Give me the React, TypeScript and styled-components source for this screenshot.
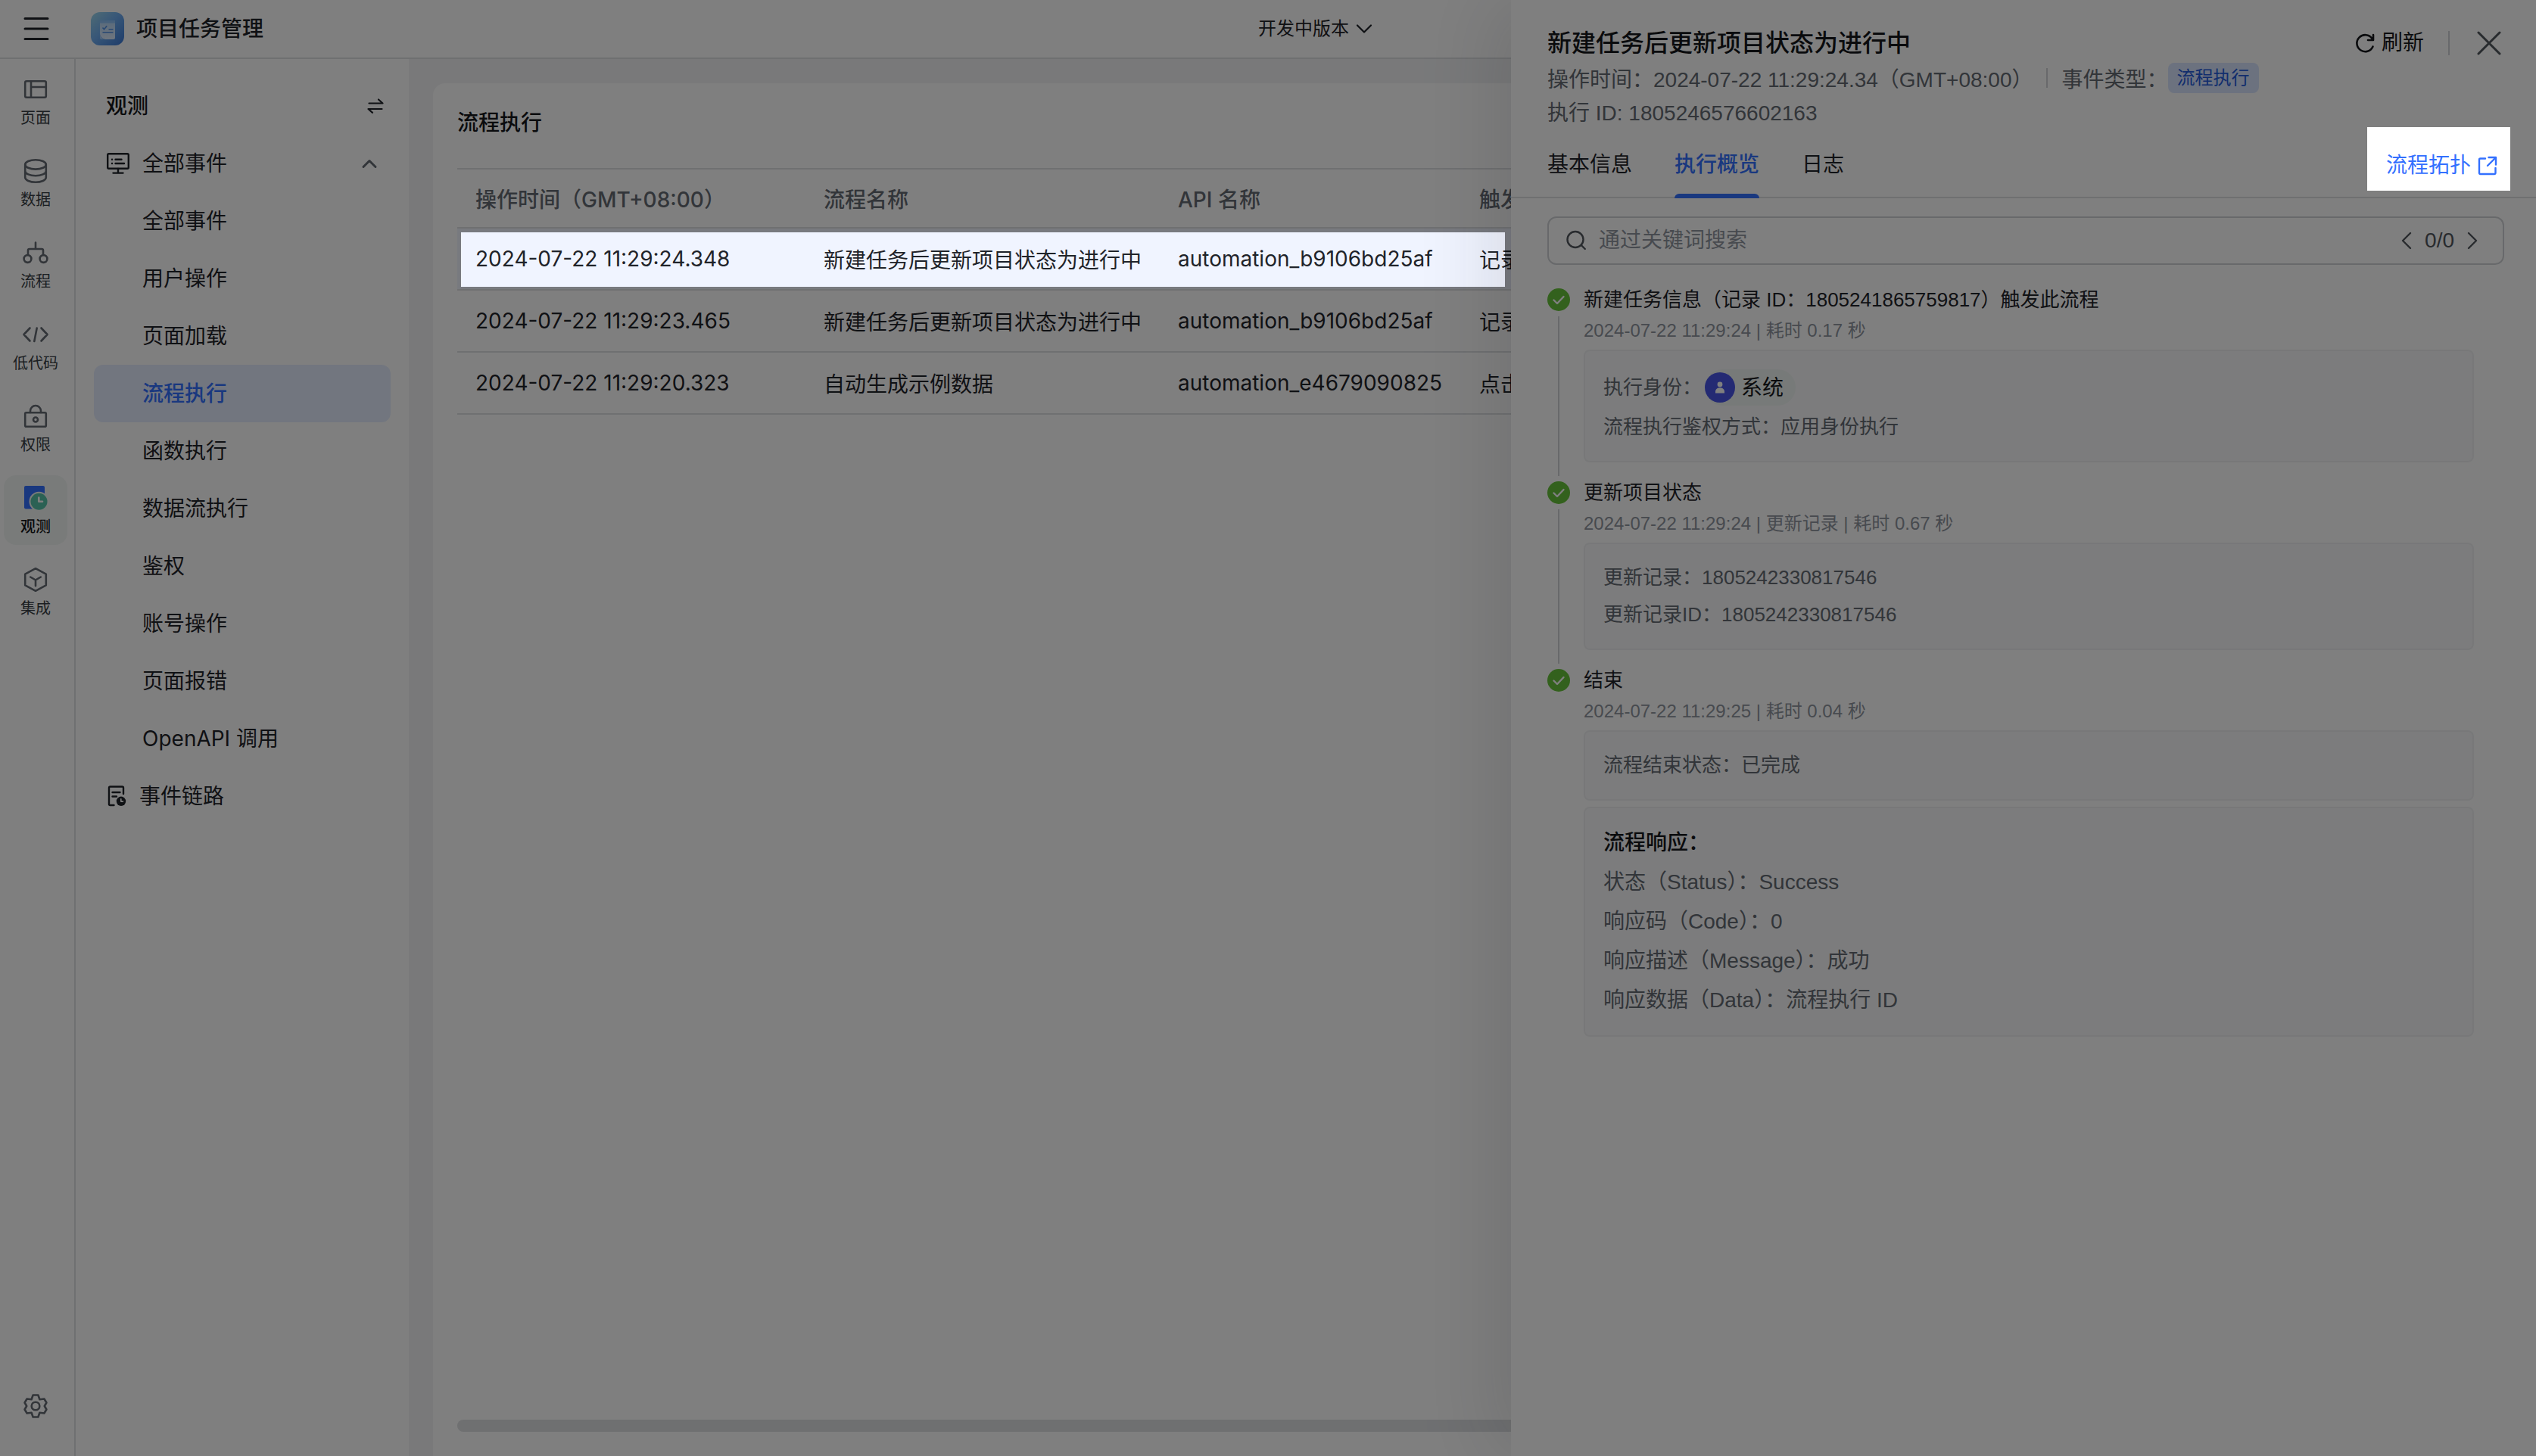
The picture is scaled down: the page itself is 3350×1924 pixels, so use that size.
import React from "react";
import styled, { createGlobalStyle, css } from "styled-components";

const sans = `Inter, "Noto Sans CJK SC", sans-serif`;
const drawerSans = `"Liberation Sans", "Noto Sans CJK SC", sans-serif`;

const color = {
  text: "#1f2329",
  title: "#14161a",
  secondary: "#646a73",
  muted: "#8f959e",
  line: "#dee0e3",
  blue: "#3370ff",
  canvas: "#f2f3f5",
  railActive: "#f3f7f5",
};

const DRAWER_WIDTH = "1354px";

const GlobalStyle = createGlobalStyle`
  *, *::before, *::after { box-sizing: border-box; }
  body { margin: 0; background: #fff; color: ${color.text}; font-family: ${sans}; font-size: 28px; }
  button, input, select { font: inherit; color: inherit; border: 0; padding: 0; margin: 0; background: none; }
  a { color: inherit; text-decoration: none; }
  h1, h2, p, ol { margin: 0; padding: 0; font-weight: 500; }
`;

const Page = styled.div`
  position: relative;
  display: flex;
  flex-direction: column;
  height: 100vh;
  overflow: hidden;
`;

/* ---------- top bar ---------- */

const TopBar = styled.header`
  display: flex;
  align-items: center;
  height: 78px;
  flex: none;
  border-bottom: 2px solid ${color.line};
`;

const MenuButton = styled.button`
  display: flex;
  width: 120px;
  padding-left: 30px;
`;

const TopBarBody = styled.div`
  flex: 1;
  display: grid;
  grid-template-columns: 1fr auto 1fr;
  align-items: center;
`;

const AppName = styled.h1`
  display: flex;
  align-items: center;
  gap: 16px;
  font-size: 28px;
  line-height: 40px;
`;

const VersionField = styled.label`
  display: flex;
  align-items: center;
  gap: 10px;
  padding-left: 4px;
`;

const VersionSelect = styled.select`
  appearance: none;
  font-size: 24px;
  line-height: 36px;
`;

/* ---------- frame ---------- */

const Body = styled.div`
  flex: 1;
  display: flex;
  min-height: 0;
`;

const Rail = styled.nav`
  display: flex;
  flex-direction: column;
  gap: 16px;
  width: 100px;
  flex: none;
  padding: 10px 9px 32px 5px;
  border-right: 2px solid ${color.line};
`;

const RailItem = styled.a<{ $active?: boolean }>`
  display: flex;
  flex-direction: column;
  align-items: center;
  gap: 8px;
  height: 92px;
  padding-top: 14px;
  border-radius: 16px;
  font-size: 20px;
  line-height: 28px;
  white-space: nowrap;
  color: ${(p) => (p.$active ? color.title : "#373c43")};
  font-weight: ${(p) => (p.$active ? 500 : 400)};
  background: ${(p) => (p.$active ? color.railActive : "transparent")};
  svg { color: ${color.secondary}; flex: none; }
`;

const SettingsButton = styled.button`
  display: flex;
  justify-content: center;
  margin-top: auto;
  padding: 18px 0;
  color: ${color.secondary};
`;

const Sidebar = styled.nav`
  display: flex;
  flex-direction: column;
  width: 440px;
  flex: none;
  padding: 24px;
`;

const SidebarHead = styled.div`
  display: flex;
  align-items: center;
  justify-content: space-between;
  height: 76px;
  padding: 0 10px 0 16px;
`;

const SidebarTitle = styled.h2`
  font-size: 28px;
  line-height: 40px;
  color: ${color.title};
`;

const IconButton = styled.button`
  display: flex;
`;

const SidebarItem = styled.a<{ $active?: boolean; $child?: boolean }>`
  display: flex;
  align-items: center;
  gap: 16px;
  height: 76px;
  padding: 0 18px 0 16px;
  border-radius: 12px;
  line-height: 40px;
  ${(p) => p.$child && css`padding-left: 64px;`}
  ${(p) => p.$active && css`
    color: ${color.blue};
    background: #e5edff;
    font-weight: 500;
  `}
`;

const ItemLabel = styled.span`
  flex: 1;
`;

const Content = styled.main`
  flex: 1;
  display: flex;
  min-width: 0;
  padding: 32px 32px 0;
  background: ${color.canvas};
`;

const Panel = styled.section`
  flex: 1;
  display: flex;
  flex-direction: column;
  min-width: 0;
  padding: 32px;
  border-radius: 16px 16px 0 0;
  background: #fff;
`;

const PanelTitle = styled.h2`
  height: 80px;
  font-size: 28px;
  line-height: 40px;
  color: ${color.title};
`;

const Table = styled.table`
  width: 100%;
  table-layout: fixed;
  border-collapse: collapse;
  border-top: 2px solid ${color.line};
`;

const Col = styled.col<{ $width?: number }>`
  width: ${(p) => (p.$width ? `${p.$width}px` : "auto")};
`;

const Row = styled.tr<{ $highlight?: boolean }>`
  background: ${(p) => (p.$highlight ? "#f0f4ff" : "transparent")};
  border-bottom: 2px solid ${color.line};
`;

const HeadCell = styled.th`
  height: 78px;
  padding: 0 24px;
  text-align: left;
  font-weight: 500;
  color: ${color.secondary};
`;

const Cell = styled.td`
  height: 82px;
  padding: 0 24px;
  white-space: nowrap;
`;

const ScrollTrack = styled.div`
  margin-top: auto;
  height: 16px;
  border-radius: 8px;
  background: #dee0e3;
`;

/* ---------- drawer ---------- */

const Drawer = styled.aside`
  position: absolute;
  top: 0;
  right: 0;
  bottom: 0;
  display: flex;
  flex-direction: column;
  width: ${DRAWER_WIDTH};
  background: #fff;
  box-shadow: -24px 0 96px rgba(31, 35, 41, 0.12);
  font-family: ${drawerSans};
`;

const DrawerHead = styled.div`
  padding: 33px 46px 0 48px;
`;

const TitleRow = styled.div`
  display: flex;
  align-items: center;
  justify-content: space-between;
  height: 48px;
`;

const DrawerTitle = styled.h2`
  font-size: 32px;
  line-height: 48px;
  color: ${color.title};
`;

const Actions = styled.div`
  display: flex;
  align-items: center;
  gap: 32px;
`;

const TextButton = styled.button`
  display: flex;
  align-items: center;
  gap: 8px;
  line-height: 40px;
  color: ${color.title};
`;

const CloseButton = styled(IconButton)`
  padding-left: 4px;
  color: #51565d;
`;

const Divider = styled.span<{ $size: number }>`
  width: 2px;
  height: ${(p) => p.$size}px;
  background: #d0d3d6;
`;

const MetaRow = styled.div`
  display: flex;
  align-items: center;
  gap: 18px;
  height: 44px;
  color: ${color.secondary};
`;

const MetaPair = styled.span`
  display: flex;
  align-items: center;
`;

const Tag = styled.span`
  padding: 0 12px;
  border-radius: 8px;
  font-size: 24px;
  line-height: 40px;
  color: #245bdb;
  background: #d9e4ff;
`;

const TabBar = styled.div`
  display: flex;
  align-items: center;
  gap: 56px;
  height: 93px;
  flex: none;
  padding: 0 50px 0 48px;
  border-bottom: 2px solid ${color.line};
`;

const Tab = styled.button<{ $active?: boolean }>`
  position: relative;
  align-self: stretch;
  padding-top: 6px;
  line-height: 40px;
  color: ${(p) => (p.$active ? color.blue : color.text)};
  font-weight: ${(p) => (p.$active ? 500 : 400)};
  ${(p) => p.$active && css`
    &::after {
      content: "";
      position: absolute;
      left: 0;
      right: 0;
      bottom: -2px;
      height: 6px;
      border-radius: 6px 6px 0 0;
      background: ${color.blue};
    }
  `}
`;

const TopologyLink = styled.a`
  display: flex;
  align-items: center;
  gap: 8px;
  margin-left: auto;
  padding-top: 8px;
  line-height: 40px;
  color: ${color.blue};
`;

const SearchBox = styled.div`
  display: flex;
  align-items: center;
  gap: 16px;
  height: 64px;
  flex: none;
  margin: 24px 42px 26px 48px;
  padding: 0 32px 0 22px;
  border: 2px solid #d0d3d6;
  border-radius: 12px;
  color: #51565d;
`;

const SearchInput = styled.input`
  flex: 1;
  height: 40px;
  outline: none;
  &::placeholder { color: ${color.muted}; opacity: 1; }
`;

const Pager = styled.div`
  display: flex;
  align-items: center;
  gap: 16px;
  line-height: 40px;
`;

const Steps = styled.ol`
  list-style: none;
  padding: 0 82px 0 48px;
`;

const Step = styled.li`
  display: flex;
  gap: 18px;
`;

const StepMarker = styled.div`
  display: flex;
  flex-direction: column;
  align-items: center;
  gap: 7px;
  width: 30px;
  padding: 5px 0 2px;
`;

const StepLine = styled.span`
  flex: 1;
  width: 2px;
  background: #d0d3d6;
`;

const StepBody = styled.div`
  flex: 1;
  display: flex;
  flex-direction: column;
  padding-bottom: 20px;
`;

const StepTitle = styled.h2`
  font-size: 26px;
  font-weight: 400;
  line-height: 40px;
  color: ${color.text};
`;

const StepMeta = styled.p`
  margin-bottom: 4px;
  font-size: 24px;
  font-weight: 400;
  line-height: 42px;
  color: ${color.muted};
`;

const Card = styled.div`
  padding: 20px 24px;
  border: 2px solid #f0f1f3;
  border-radius: 8px;
  background: #f8f9fa;
  & + & { margin-top: 8px; }
`;

const Line = styled.p<{ $large?: boolean; $strong?: boolean }>`
  display: flex;
  align-items: center;
  font-weight: ${(p) => (p.$strong ? 500 : 400)};
  font-size: ${(p) => (p.$large ? 28 : 26)}px;
  line-height: ${(p) => (p.$large ? 52 : 49)}px;
  color: ${(p) => (p.$strong ? color.title : color.secondary)};
`;

const IdentityLine = styled(Line)`
  height: 56px;
`;

const UserChip = styled.span`
  display: flex;
  align-items: center;
  gap: 8px;
  height: 48px;
  margin-left: 4px;
  padding: 0 16px 0 0;
  border-radius: 24px;
  font-size: 28px;
  color: ${color.title};
  background: #eff4f2;
`;

/* ---------- dimming layer with two windows cut out of it ---------- */

const rowRight = `calc(100% - ${DRAWER_WIDTH} - 8px)`;
const linkLeft = "calc(100% - 223px)";
const linkRight = "calc(100% - 34px)";

const Dimmer = styled.div`
  position: absolute;
  inset: 0;
  pointer-events: none;
  background: rgba(0, 0, 0, 0.5);
  clip-path: polygon(
    evenodd,
    0 0, 100% 0, 100% 100%, 0 100%, 0 0,
    609px 307px, ${rowRight} 307px, ${rowRight} 379px, 609px 379px, 609px 307px, 0 0,
    ${linkLeft} 168px, ${linkRight} 168px, ${linkRight} 252px, ${linkLeft} 252px, ${linkLeft} 168px, 0 0
  );
`;

/* ---------- icons ---------- */

type IconProps = { w?: number; h?: number; stroke?: number; children: React.ReactNode };

const Icon = ({ w = 32, h = 32, stroke = 2.6, children }: IconProps) => (
  <svg
    width={w}
    height={h}
    viewBox={`0 0 ${w} ${h}`}
    fill="none"
    stroke="currentColor"
    strokeWidth={stroke}
    strokeLinecap="round"
    strokeLinejoin="round"
    overflow="visible"
    aria-hidden="true"
  >
    {children}
  </svg>
);

const PageIcon = () => (
  <Icon><rect x="2.2" y="5.2" width="27.6" height="21.6" rx="2" /><path d="M10 5.2v21.6M10 13h19.8" /></Icon>
);
const DataIcon = () => (
  <Icon>
    <ellipse cx="16" cy="7.4" rx="13.8" ry="6.2" />
    <path d="M2.2 7.4v17.2c0 3.4 6.2 6.2 13.8 6.2s13.8-2.8 13.8-6.2V7.4M2.2 16c0 3.4 6.2 6.2 13.8 6.2S29.8 19.400 29.8 16" />
  </Icon>
);
const FlowIcon = () => (
  <Icon>
    <path d="M16 2.500v8.500M6 18.500v-5.500a2 2 0 0 1 2-2h16a2 2 0 0 1 2 2v5.500" />
    <circle cx="5.500" cy="24" r="4.900" /><circle cx="26.500" cy="24" r="4.900" />
  </Icon>
);
const CodeIcon = () => (
  <Icon><path d="M8.500 7.500 0.500 16l8 8.500M23.500 7.500l8 8.500-8 8.500M17.700 7.500 14.300 25" /></Icon>
);
const LockIcon = () => (
  <Icon>
    <rect x="2.200" y="11.300" width="27.600" height="18.400" rx="1.500" />
    <path d="M9 11V9a7 7 0 0 1 14 0v2" /><circle cx="16" cy="20.500" r="3" />
  </Icon>
);
const ObserveIcon = () => (
  <Icon>
    <rect x="1" y="0" width="27" height="30.500" rx="2" fill="#3370ff" stroke="none" />
    <circle cx="20.500" cy="20.700" r="13" fill={color.railActive} stroke="none" />
    <circle cx="20.500" cy="20.700" r="11" fill="#57c3a8" stroke="none" />
    <path d="M20.300 15.500v5.300h4.700" stroke="#fff" />
  </Icon>
);
const CubeIcon = () => (
  <Icon>
    <path d="M16 1.200 29.800 8.700v14.600L16 30.800 2.200 23.300V8.700zM9.200 12.500l6.800 4 6.800-4M16 16.500v7.700" />
  </Icon>
);
const GearIcon = () => (
  <Icon>
    <path d="M12.600 1.500h6.800l2 5.700 6-.7 3 5-2.600 4.500 2.600 4.500-3 5-6-.7-2 5.700h-6.800l-2-5.700-6 .7-3-5 2.600-4.500-2.600-4.500 3-5 6 .7z" />
    <circle cx="16" cy="16" r="5.300" />
  </Icon>
);
const MenuIcon = () => (
  <Icon w={36} h={32} stroke={3}><path d="M3 2.500h30M3 16h30M3 29.500h30" /></Icon>
);
const AppLogo = () => (
  <svg width="44" height="44" viewBox="0 0 44 44" aria-hidden="true">
    <defs>
      <linearGradient id="logoFill" x1="0" y1="0" x2="1" y2="1">
        <stop offset="0" stopColor="#9ed8ea" />
        <stop offset="0.450" stopColor="#70aef0" />
        <stop offset="1" stopColor="#3a77d4" />
      </linearGradient>
      <linearGradient id="logoSheet" x1="0" y1="0" x2="0" y2="1">
        <stop offset="0" stopColor="#b4d6f8" />
        <stop offset="1" stopColor="#dceafc" />
      </linearGradient>
    </defs>
    <rect width="44" height="44" rx="12" fill="url(#logoFill)" />
    <path d="M12 11h20v23a2 2 0 0 1-2 2H19c-4-1-7-4-7-8z" fill="url(#logoSheet)" />
    <path d="M12 11h20v3.500H12z" fill="#8cc0f7" />
    <path d="M12 28c0 5 3 8 7 8h-5a2 2 0 0 1-2-2z" fill="#a9cdf8" />
    <path d="m15.500 20.500 2 2.200 3.700-4.500M23.500 22.800h6M15.500 26.700h14" fill="none" stroke="#4f8fe4" strokeWidth="1.600" />
  </svg>
);
const ChevronDown = () => <Icon w={20} h={12} stroke={2.2}><path d="m1 1.500 9 9 9-9" /></Icon>;
const ChevronUp = () => <Icon w={20} h={12} stroke={3}><path d="m2 10.500 8-8 8 8" stroke={color.secondary} /></Icon>;
const SwapIcon = () => (
  <Icon w={20} h={20} stroke={2.200}><path d="M1.500 6.500h18L14 1.500M18.500 14h-18L6 18.800" /></Icon>
);
const MonitorIcon = () => (
  <Icon w={32} h={28} stroke={2.400}>
    <rect x="2.200" y="1.200" width="27.600" height="19.600" rx="1.500" />
    <path d="M16 21v5M9.500 26.600h13M12.500 8.700h8M12.500 14h11.500M8 8.700h.1M8 14h.1" />
  </Icon>
);
const TraceIcon = () => (
  <Icon w={28} h={28} stroke={2.400}>
    <path d="M23 11V3a1.500 1.500 0 0 0-1.500-1.500h-16A1.500 1.500 0 0 0 4 3v21.500A1.500 1.500 0 0 0 5.500 26H10.500M8.500 9h10M8.500 14.500h5.500" />
    <circle cx="20" cy="20.800" r="6.200" fill="currentColor" stroke="none" />
    <path d="M19.800 17.800v3.300h2.700" stroke="#fff" strokeWidth="1.600" />
  </Icon>
);
const RefreshIcon = () => (
  <Icon w={28} h={28} stroke={2.600}><path d="M24.500 18.500A11 11 0 1 1 23.500 8M25 3v7h-7" /></Icon>
);
const CloseIcon = () => <Icon stroke={3}><path d="m2 2 28 28M30 2 2 30" /></Icon>;
const SearchIcon = () => (
  <Icon w={28} h={28} stroke={2.400}><circle cx="13" cy="12.500" r="10.500" /><path d="m20.800 20 5 5" /></Icon>
);
const PrevIcon = () => <Icon w={16} h={24} stroke={2.400}><path d="M13 2 3 12l10 10" /></Icon>;
const NextIcon = () => <Icon w={16} h={24} stroke={2.400}><path d="m3 2 10 10L3 22" /></Icon>;
const ExternalIcon = () => (
  <Icon w={28} h={28} stroke={2.400}>
    <path d="M11 4.500H4.500A1.500 1.500 0 0 0 3 6v17.500A1.500 1.500 0 0 0 4.500 25H23a1.500 1.500 0 0 0 1.500-1.500V17M15.500 3H25v9.500M25 3 14 14" />
  </Icon>
);
const CheckIcon = () => (
  <svg width="30" height="30" viewBox="0 0 30 30" aria-hidden="true">
    <circle cx="15" cy="15" r="15" fill="#67c23a" />
    <path d="m8.500 15.500 4.500 4.500 8.500-9" fill="none" stroke="#fff" strokeWidth="2.400" strokeLinecap="round" strokeLinejoin="round" />
  </svg>
);
const AvatarIcon = () => (
  <svg width="40" height="40" viewBox="0 0 40 40" aria-hidden="true">
    <circle cx="20" cy="20" r="20" fill="#4954e6" />
    <circle cx="20" cy="16" r="3.400" fill="#fff" />
    <path d="M14 27.500v-2a5 5 0 0 1 5-5h2a5 5 0 0 1 5 5v2z" fill="#fff" />
  </svg>
);

/* ---------- data ---------- */

const railItems = [
  { label: "页面", icon: <PageIcon /> },
  { label: "数据", icon: <DataIcon /> },
  { label: "流程", icon: <FlowIcon /> },
  { label: "低代码", icon: <CodeIcon /> },
  { label: "权限", icon: <LockIcon /> },
  { label: "观测", icon: <ObserveIcon />, active: true },
  { label: "集成", icon: <CubeIcon /> },
];

const eventItems = [
  "全部事件", "用户操作", "页面加载", "流程执行", "函数执行",
  "数据流执行", "鉴权", "账号操作", "页面报错", "OpenAPI 调用",
];

const columns = ["操作时间（GMT+08:00）", "流程名称", "API 名称", "触发方式"];

const rows = [
  ["2024-07-22 11:29:24.348", "新建任务后更新项目状态为进行中", "automation_b9106bd25af", "记录变更"],
  ["2024-07-22 11:29:23.465", "新建任务后更新项目状态为进行中", "automation_b9106bd25af", "记录变更"],
  ["2024-07-22 11:29:20.323", "自动生成示例数据", "automation_e4679090825", "点击触发"],
];

const tabs = ["基本信息", "执行概览", "日志"];

const response = [
  "状态（Status）：Success",
  "响应码（Code）：0",
  "响应描述（Message）：成功",
  "响应数据（Data）：流程执行 ID",
];

type StepItemProps = { title: string; meta: string; last?: boolean; children: React.ReactNode };

const StepItem = ({ title, meta, last, children }: StepItemProps) => (
  <Step>
    <StepMarker>
      <CheckIcon />
      {!last && <StepLine />}
    </StepMarker>
    <StepBody>
      <StepTitle>{title}</StepTitle>
      <StepMeta>{meta}</StepMeta>
      {children}
    </StepBody>
  </Step>
);

export default function App() {
  return (
    <Page>
      <GlobalStyle />
      <TopBar>
        <MenuButton aria-label="菜单"><MenuIcon /></MenuButton>
        <TopBarBody>
          <AppName><AppLogo />项目任务管理</AppName>
          <VersionField>
            <VersionSelect aria-label="版本">
              <option>开发中版本</option>
            </VersionSelect>
            <ChevronDown />
          </VersionField>
        </TopBarBody>
      </TopBar>

      <Body>
        <Rail>
          {railItems.map((item) => (
            <RailItem key={item.label} href="#" $active={item.active}>
              {item.icon}
              {item.label}
            </RailItem>
          ))}
          <SettingsButton aria-label="设置"><GearIcon /></SettingsButton>
        </Rail>

        <Sidebar>
          <SidebarHead>
            <SidebarTitle>观测</SidebarTitle>
            <IconButton aria-label="切换"><SwapIcon /></IconButton>
          </SidebarHead>
          <SidebarItem href="#">
            <MonitorIcon />
            <ItemLabel>全部事件</ItemLabel>
            <ChevronUp />
          </SidebarItem>
          {eventItems.map((label) => (
            <SidebarItem key={label} href="#" $child $active={label === "流程执行"}>
              {label}
            </SidebarItem>
          ))}
          <SidebarItem href="#">
            <TraceIcon />
            <ItemLabel>事件链路</ItemLabel>
          </SidebarItem>
        </Sidebar>

        <Content>
          <Panel>
            <PanelTitle>流程执行</PanelTitle>
            <Table>
              <colgroup>
                <Col $width={460} />
                <Col $width={468} />
                <Col $width={398} />
                <Col />
              </colgroup>
              <thead>
                <Row>{columns.map((c) => <HeadCell key={c} scope="col">{c}</HeadCell>)}</Row>
              </thead>
              <tbody>
                {rows.map((cells, i) => (
                  <Row key={cells[0]} $highlight={i === 0}>
                    {cells.map((c) => <Cell key={c}>{c}</Cell>)}
                  </Row>
                ))}
              </tbody>
            </Table>
            <ScrollTrack />
          </Panel>
        </Content>
      </Body>

      <Drawer>
        <DrawerHead>
          <TitleRow>
            <DrawerTitle>新建任务后更新项目状态为进行中</DrawerTitle>
            <Actions>
              <TextButton><RefreshIcon />刷新</TextButton>
              <Divider $size={32} />
              <CloseButton aria-label="关闭"><CloseIcon /></CloseButton>
            </Actions>
          </TitleRow>
          <MetaRow>
            <span>操作时间：2024-07-22 11:29:24.34（GMT+08:00）</span>
            <Divider $size={26} />
            <MetaPair>事件类型：<Tag>流程执行</Tag></MetaPair>
          </MetaRow>
          <MetaRow>执行 ID: 1805246576602163</MetaRow>
        </DrawerHead>
        <TabBar role="tablist">
          {tabs.map((t) => (
            <Tab key={t} role="tab" aria-selected={t === "执行概览"} $active={t === "执行概览"}>{t}</Tab>
          ))}
          <TopologyLink href="#">流程拓扑<ExternalIcon /></TopologyLink>
        </TabBar>
        <SearchBox>
          <SearchIcon />
          <SearchInput type="text" aria-label="搜索" placeholder="通过关键词搜索" />
          <Pager>
            <IconButton aria-label="上一个"><PrevIcon /></IconButton>
            0/0
            <IconButton aria-label="下一个"><NextIcon /></IconButton>
          </Pager>
        </SearchBox>
        <Steps>
          <StepItem title="新建任务信息（记录 ID：1805241865759817）触发此流程" meta="2024-07-22 11:29:24 | 耗时 0.17 秒">
            <Card>
              <IdentityLine>执行身份：<UserChip><AvatarIcon />系统</UserChip></IdentityLine>
              <Line>流程执行鉴权方式：应用身份执行</Line>
            </Card>
          </StepItem>
          <StepItem title="更新项目状态" meta="2024-07-22 11:29:24 | 更新记录 | 耗时 0.67 秒">
            <Card>
              <Line>更新记录：1805242330817546</Line>
              <Line>更新记录ID：1805242330817546</Line>
            </Card>
          </StepItem>
          <StepItem title="结束" meta="2024-07-22 11:29:25 | 耗时 0.04 秒" last>
            <Card><Line>流程结束状态：已完成</Line></Card>
            <Card>
              <Line $large $strong>流程响应：</Line>
              {response.map((r) => <Line key={r} $large>{r}</Line>)}
            </Card>
          </StepItem>
        </Steps>
      </Drawer>

      <Dimmer />
    </Page>
  );
}
